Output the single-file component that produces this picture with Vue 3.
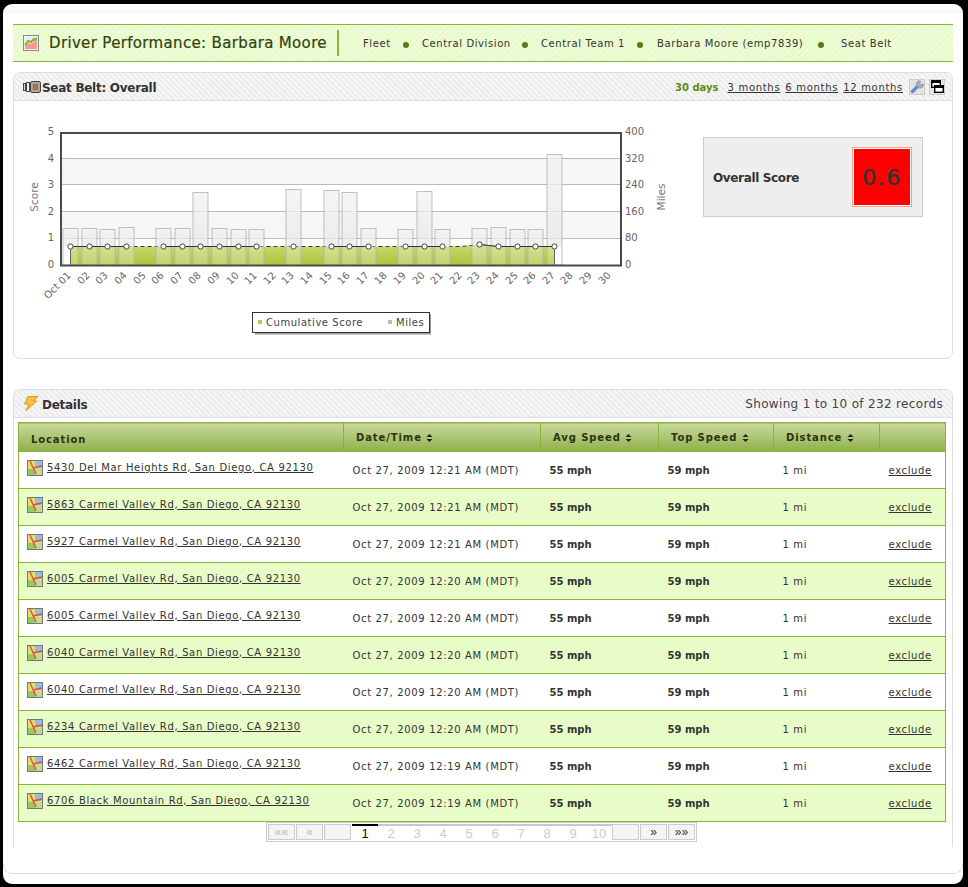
<template>
  <div class="page">
    <div class="title-bar">
      <svg class="title-icon" width="16" height="16" viewBox="0 0 16 16">
        <rect x="0.5" y="0.5" width="15" height="15" fill="#f2f4fa" stroke="#888" />
        <rect x="2" y="2" width="12" height="12" fill="#e6ecf8" />
        <path d="M2 14V10L5 8L8 9L14 5V14Z" fill="#f59a8c" />
        <path d="M2 10L5 6L8 7L11 4L12 5L14 3" fill="none" stroke="#8fb52e" stroke-width="2" />
      </svg>
      <h1>Driver Performance: Barbara Moore</h1>
      <ul class="crumbs">
        <li class="c1">Fleet</li>
        <li class="c2">Central Division</li>
        <li class="c3">Central Team 1</li>
        <li class="c4">Barbara Moore (emp7839)</li>
        <li class="c5">Seat Belt</li>
      </ul>
    </div>

    <section class="panel chart-panel">
      <header class="panel-head">
        <svg width="18" height="12" viewBox="0 0 18 12">
          <rect x="0.5" y="2.5" width="2" height="7" fill="#ddd" stroke="#444" />
          <rect x="3.5" y="1.5" width="3" height="9" fill="#eee" stroke="#444" />
          <rect x="7.5" y="0.5" width="10" height="11" rx="1.5" fill="#aaa" stroke="#444" />
          <rect x="10.5" y="3.5" width="4" height="5" fill="#c8742a" stroke="#555" stroke-width="0.6" />
        </svg>
        <h2 class="belt-title">Seat Belt: Overall</h2>
        <div class="ranges">
          <b>30 days</b>
          <a>3 months</a>
          <a>6 months</a>
          <a>12 months</a>
          <span class="tool">
            <svg width="14" height="14" viewBox="0 0 14 14">
              <path d="M2.5 11.5L8 6" stroke="#5f8fd0" stroke-width="3.4" stroke-linecap="round" />
              <path d="M7.5 6.5A3 3 0 0 1 11 1.5L9.5 3.5L11 5L13 3.5A3 3 0 0 1 7.5 6.5Z" fill="#a8b0bc" stroke="#808894" stroke-width="0.6" />
            </svg>
          </span>
          <span class="tool">
            <svg width="13" height="13" viewBox="0 0 13 13">
              <rect x="0.7" y="0.7" width="8.6" height="6.6" fill="#fff" stroke="#000" stroke-width="1.4" />
              <rect x="1" y="1" width="8" height="2" fill="#000" />
              <rect x="3.7" y="5.7" width="8.6" height="6.6" fill="#fff" stroke="#000" stroke-width="1.4" />
              <rect x="4" y="6" width="8" height="2" fill="#000" />
            </svg>
          </span>
        </div>
      </header>

      <div class="chart-body">
        <svg class="chart" width="660" height="220" viewBox="0 0 660 220">
          <defs>
            <linearGradient id="areaFill" x1="0" y1="0" x2="0" y2="1">
              <stop offset="0" stop-color="#c6da74" />
              <stop offset="1" stop-color="#aac637" />
            </linearGradient>
            <linearGradient id="barFill" x1="0" y1="0" x2="0" y2="1">
              <stop offset="0" stop-color="#f2f2f2" />
              <stop offset="1" stop-color="#e8e8e8" />
            </linearGradient>
          </defs>
          <g :transform="`translate(${-ox} ${-oy})`">
            <rect x="60" y="158" width="562" height="26.5" fill="#f6f6f6" />
            <rect x="60" y="211" width="562" height="27" fill="#f6f6f6" />
            <line v-for="y in gridLines" :key="y" x1="60" x2="622" :y1="y" :y2="y" stroke="#bbb" />
            <path :d="areaPath" fill="url(#areaFill)" />
            <path :d="`M${days[0].x} 265V${levelY(days[0])}`" stroke="#333" />
            <path :d="`M${days[26].x} 265V${levelY(days[26])}`" stroke="#333" />
            <path :d="dashPath" fill="none" stroke="#333" stroke-dasharray="4 3" />
            <template v-for="d in days" :key="d.label">
              <template v-if="d.top">
                <rect :x="d.x - 7.5" :y="d.top" width="15" :height="levelY(d) - d.top" fill="url(#barFill)" fill-opacity="0.75" />
                <rect :x="d.x - 7.5" :y="levelY(d)" width="15" :height="265 - levelY(d)" fill="#fff" fill-opacity="0.25" />
                <rect :x="d.x - 7.5" :y="d.top" width="15" :height="265 - d.top" fill="none" stroke="#b4b4b4" stroke-opacity="0.85" />
              </template>
            </template>
            <path :d="linePath" fill="none" stroke="#333" />
            <template v-for="d in days" :key="'m' + d.label">
              <circle v-if="d.top" :cx="d.x" :cy="levelY(d)" r="2.6" fill="#fff" stroke="#444" />
            </template>
            <rect x="61" y="133" width="560" height="132.5" fill="none" stroke="#4a4a4a" stroke-width="2" />

            <text v-for="(t, i) in leftTicks" :key="t" x="54" :y="135 + i * 26.6" class="tick" text-anchor="end">{{ t }}</text>
            <text v-for="(t, i) in rightTicks" :key="t" x="625" :y="135 + i * 26.6" class="tick">{{ t }}</text>
            <text class="axis" text-anchor="middle" transform="translate(38 197) rotate(-90)">Score</text>
            <text class="axis" text-anchor="middle" transform="translate(665 197) rotate(-90)">Miles</text>
            <text
              v-for="d in days"
              :key="'l' + d.label"
              class="tick"
              text-anchor="end"
              :transform="`translate(${d.x + 1} 276) rotate(-45)`"
            >{{ d.label }}</text>

            <rect x="255" y="314.5" width="176" height="20" fill="#999" />
            <rect x="252.5" y="312.5" width="177" height="20" fill="#fff" stroke="#333" />
            <rect x="258" y="320" width="4" height="4" fill="#b2cc46" />
            <text x="266" y="326" class="legend">Cumulative Score</text>
            <rect x="388" y="320" width="4" height="4" fill="#bbb" />
            <text x="396" y="326" class="legend">Miles</text>
          </g>
        </svg>

        <div class="score-box">
          <span>Overall Score</span>
          <div class="score-value"><div>0.6</div></div>
        </div>
      </div>
    </section>

    <section class="panel details-panel">
      <header class="panel-head">
        <svg width="16" height="15" viewBox="0 0 16 15">
          <path d="M5 0.5H15L10 5H14L3 14.5L6 8H1.5Z" fill="#f6c238" stroke="#e0962a" />
        </svg>
        <h2>Details</h2>
        <span class="showing">Showing 1 to 10 of 232 records</span>
      </header>

      <table>
        <colgroup>
          <col style="width: 325px" />
          <col style="width: 197px" />
          <col style="width: 118px" />
          <col style="width: 115px" />
          <col style="width: 106px" />
          <col style="width: 66px" />
        </colgroup>
        <thead>
          <tr>
            <th class="th-loc">Location</th>
            <th v-for="h in sortHeads" :key="h">
              {{ h }}
              <svg class="sort" width="7" height="8" viewBox="0 0 7 8">
                <path d="M3.5 0L6.5 3H0.5ZM3.5 8L0.5 5H6.5Z" fill="#222" />
              </svg>
            </th>
            <th></th>
          </tr>
        </thead>
        <tbody>
          <tr v-for="(addr, i) in addresses" :key="i" :class="{ alt: i % 2 === 1 }">
            <td class="loc">
              <div class="loc-inner">
                <svg width="16" height="16" viewBox="0 0 16 16">
                  <rect x="0.5" y="0.5" width="15" height="15" fill="#e6dc70" stroke="#777" />
                  <rect x="8" y="1" width="7" height="7" fill="#94bce4" />
                  <rect x="1" y="9" width="7" height="6" fill="#9ac860" />
                  <rect x="8" y="9" width="7" height="6" fill="#c4d890" />
                  <path d="M3 1L9 14M6 8L15 6" fill="none" stroke="#e0503a" stroke-width="1.4" />
                </svg>
                <a>{{ addr }}</a>
              </div>
            </td>
            <td>{{ times[i] }}</td>
            <td><b>55 mph</b></td>
            <td><b>59 mph</b></td>
            <td>1 mi</td>
            <td><a>exclude</a></td>
          </tr>
        </tbody>
      </table>

      <div class="pager">
        <span class="btn off">««</span>
        <span class="btn off">«</span>
        <span class="btn blank"></span>
        <span v-for="p in 10" :key="p" class="num" :class="{ on: p === 1 }">{{ p }}</span>
        <span class="btn blank"></span>
        <span class="btn">»</span>
        <span class="btn">»»</span>
      </div>
    </section>

    <div class="page-foot"></div>
  </div>
</template>

<script setup>
const ox = 20
const oy = 120

// px position of each miles bar top, 0 = no data that day
const barTops = [
  228.5, 228.5, 229.5, 227.5, 0, 228.5, 228.5, 192.5, 228.5, 229.5, 229.5, 0, 189.5, 0, 190.5, 192.5,
  228.5, 0, 229.5, 191.5, 229.5, 0, 228.5, 227.5, 229.5, 229.5, 154.5, 0, 0, 0,
]

const days = barTops.map((top, i) => ({
  x: Math.floor(70.7 + i * 18.6) + 0.5,
  top,
  label: i === 0 ? 'Oct 01' : String(i + 1).padStart(2, '0'),
}))

const levelY = (d) => (d.label === '23' ? 244.5 : 246.5)

const shown = days.slice(0, 27)
const gridLines = [158.5, 184.5, 211.5, 238.5]
const leftTicks = [5, 4, 3, 2, 1, 0]
const rightTicks = [400, 320, 240, 160, 80, 0]

const linePts = shown.map((d) => `${d.x} ${levelY(d)}`)
const areaPath = `M${shown[0].x} 265L${linePts.join('L')}L${shown[26].x} 265Z`
const dashPath = `M${linePts.join('L')}`

// solid only between two neighbouring days that have data
let solid = ''
for (let i = 0; i < shown.length - 1; i++) {
  if (shown[i].top && shown[i + 1].top) {
    solid += `M${linePts[i]}L${linePts[i + 1]}`
  }
}
const linePath = solid

const sortHeads = ['Date/Time', 'Avg Speed', 'Top Speed', 'Distance']

const addresses = [
  '5430 Del Mar Heights Rd, San Diego, CA 92130',
  '5863 Carmel Valley Rd, San Diego, CA 92130',
  '5927 Carmel Valley Rd, San Diego, CA 92130',
  '6005 Carmel Valley Rd, San Diego, CA 92130',
  '6005 Carmel Valley Rd, San Diego, CA 92130',
  '6040 Carmel Valley Rd, San Diego, CA 92130',
  '6040 Carmel Valley Rd, San Diego, CA 92130',
  '6234 Carmel Valley Rd, San Diego, CA 92130',
  '6462 Carmel Valley Rd, San Diego, CA 92130',
  '6706 Black Mountain Rd, San Diego, CA 92130',
]

const times = [
  'Oct 27, 2009 12:21 AM (MDT)',
  'Oct 27, 2009 12:21 AM (MDT)',
  'Oct 27, 2009 12:21 AM (MDT)',
  'Oct 27, 2009 12:20 AM (MDT)',
  'Oct 27, 2009 12:20 AM (MDT)',
  'Oct 27, 2009 12:20 AM (MDT)',
  'Oct 27, 2009 12:20 AM (MDT)',
  'Oct 27, 2009 12:20 AM (MDT)',
  'Oct 27, 2009 12:19 AM (MDT)',
  'Oct 27, 2009 12:19 AM (MDT)',
]
</script>

<style>
html,
body {
  margin: 0;
  background: #000;
  overflow: hidden;
}
</style>

<style scoped>
.page {
  box-sizing: border-box;
  width: 960px;
  height: 880px;
  margin: 4px 0 0 3px;
  padding: 20px 10px 0;
  background: linear-gradient(#fafafa 0, #fafafa 10px, #fff 10px);
  border-radius: 9px;
  font-family: "DejaVu Sans", sans-serif;
  color: #333;
  display: flex;
  flex-direction: column;
}

.title-bar {
  height: 36px;
  margin-bottom: 10px;
  display: flex;
  align-items: center;
  padding-left: 10px;
  border-top: 1px solid #8ab53a;
  border-bottom: 1px solid #8ab53a;
  background: repeating-linear-gradient(135deg, #e6fbc6 0, #e6fbc6 2px, #effcdb 2px, #effcdb 4px);
}

.title-icon {
  flex: none;
}

h1 {
  margin: 0 0 0 10px;
  width: 278px;
  padding-right: 10px;
  height: 26px;
  line-height: 27px;
  font-size: 15px;
  font-weight: normal;
  letter-spacing: 0.34px;
  white-space: nowrap;
  color: #33420f;
  border-right: 2px solid #8ab53a;
  -webkit-text-stroke: 0.2px #33420f;
}

.crumbs {
  list-style: none;
  margin: 0;
  padding: 0;
  display: flex;
  font-size: 10px;
  letter-spacing: 0.6px;
  color: #333;
}

.crumbs li {
  position: relative;
  white-space: nowrap;
}

.crumbs li:not(:last-child)::after {
  content: "";
  position: absolute;
  top: 4px;
  width: 6px;
  height: 6px;
  border-radius: 50%;
  background: #4f7f10;
}

.c1 {
  margin-left: 24px;
  width: 59px;
}
.c1::after {
  left: 40px;
}
.c2 {
  width: 119px;
}
.c2::after {
  left: 100px;
}
.c3 {
  width: 116px;
}
.c3::after {
  left: 96px;
}
.c4 {
  width: 184px;
}
.c4::after {
  left: 161px;
}

.panel {
  border: 1px solid #ddd;
  border-radius: 7px 7px 0 0;
  width: 940px;
  box-sizing: border-box;
  flex: none;
}

.chart-panel {
  height: 287px;
  margin-bottom: 30px;
  border-radius: 7px;
}

.details-panel {
  height: 458px;
  border-bottom: 0;
}

.panel-head {
  height: 28px;
  box-sizing: border-box;
  display: flex;
  align-items: center;
  padding: 0 7px 0 9px;
  border-bottom: 1px solid #ddd;
  border-radius: 7px 7px 0 0;
  background: repeating-linear-gradient(45deg, #ececec 0, #ececec 2px, #f6f6f6 2px, #f6f6f6 4px);
}

h2 {
  margin: 2px 0 0 3px;
  font-size: 12px;
  font-weight: bold;
  letter-spacing: -0.28px;
  color: #333;
}

.belt-title {
  margin-left: 1px;
}

.ranges {
  margin-left: auto;
  display: flex;
  align-items: center;
  font-size: 10px;
  letter-spacing: 0.7px;
  gap: 5px;
}

.ranges b {
  letter-spacing: 0;
  color: #5b8c12;
  margin: 2px 4px 0 0;
}

.ranges a {
  margin-top: 2px;
}

a {
  color: #333;
  text-decoration: underline;
}

.tool {
  width: 16px;
  height: 16px;
  box-sizing: border-box;
  border: 1px solid #ccc;
  background: #e4e4e4;
  display: flex;
  align-items: center;
  justify-content: center;
}

.tool:first-of-type {
  margin-left: 1px;
}

.tool + .tool {
  margin-left: -1px;
}

.chart-body {
  display: flex;
  align-items: flex-start;
  padding-top: 19px;
}

.chart {
  margin-left: 6px;
  flex: none;
  overflow: visible;
}

.tick {
  font-size: 10px;
  fill: #666;
}

.axis {
  font-size: 10.5px;
  fill: #777;
}

.legend {
  font-size: 10px;
  letter-spacing: 0.55px;
  fill: #444;
}

.score-box {
  box-sizing: border-box;
  width: 220px;
  height: 80px;
  margin: 17px 0 0 23px;
  padding: 9px 10px 9px 9px;
  border: 1px solid #ccc;
  background: #eee;
  display: flex;
  align-items: center;
  justify-content: space-between;
  font-size: 12px;
  font-weight: bold;
  letter-spacing: -0.35px;
}

.score-box span {
  margin-top: 2px;
}

.score-value {
  box-sizing: border-box;
  width: 60px;
  height: 60px;
  border: 1px solid #f9a08a;
  padding: 1px;
  background: #fff;
}

.score-value div {
  height: 100%;
  background: #f00;
  display: flex;
  align-items: center;
  justify-content: center;
  font-size: 22px;
  font-weight: normal;
  letter-spacing: 1.5px;
  color: #333;
  -webkit-text-stroke: 0.4px #333;
}

.showing {
  margin: 0 2px 0 auto;
  font-size: 12px;
  letter-spacing: 0.33px;
  color: #444;
}

table {
  width: 927px;
  margin: 4px 0 0 4px;
  border-collapse: collapse;
  table-layout: fixed;
  border: 1px solid #8ab53a;
  font-size: 10px;
  letter-spacing: 0.65px;
}

th {
  height: 27px;
  padding: 1px 0 0 12px;
  text-align: left;
  font-size: 10px;
  letter-spacing: 0.9px;
  color: #2c3314;
  border-left: 1px solid #8ab53a;
  background: linear-gradient(#c8da9c, #8fb04a);
}

th.th-loc {
  height: 23px;
  padding: 5px 0 0 12px;
  border-left: 0;
}

.sort {
  vertical-align: -1px;
}

td {
  height: 36px;
  padding: 0 0 0 9px;
  border-top: 1px solid #8ab53a;
  white-space: nowrap;
}

tbody tr.alt td {
  background: #e8fcc8;
}

td b {
  font-size: 10px;
  letter-spacing: 0;
}

td.loc {
  padding-left: 8px;
}

.loc-inner {
  display: flex;
  align-items: center;
  gap: 4px;
  height: 32px;
  margin-bottom: 4px;
}

.loc-inner svg {
  flex: none;
}

.loc-inner a {
  margin-bottom: 2px;
}

.pager {
  width: 431px;
  height: 20px;
  box-sizing: border-box;
  margin: 0 0 0 252px;
  padding: 1px;
  display: flex;
  border: 1px solid #ccc;
  font-family: "Liberation Sans", sans-serif;
  font-size: 13px;
  color: #ccc;
}

.btn {
  width: 27px;
  box-sizing: border-box;
  margin-right: 1px;
  border: 1px solid #ccc;
  background: #f4f4f4;
  color: #333;
  font-size: 12px;
  line-height: 15px;
  text-align: center;
}

.btn:last-child {
  margin-right: 0;
}

.btn.off {
  color: #bbb;
}

.num {
  width: 26px;
  box-sizing: border-box;
  border-top: 2px solid #ccc8c0;
  line-height: 15px;
  text-align: center;
}

.num.on {
  border-top-color: #000;
  color: #111;
}

.page-foot {
  flex: none;
  box-sizing: border-box;
  height: 10px;
  margin: 17px -10px 0;
  border: 1px solid #ddd;
  border-top: 0;
  border-radius: 0 0 9px 9px;
}
</style>
